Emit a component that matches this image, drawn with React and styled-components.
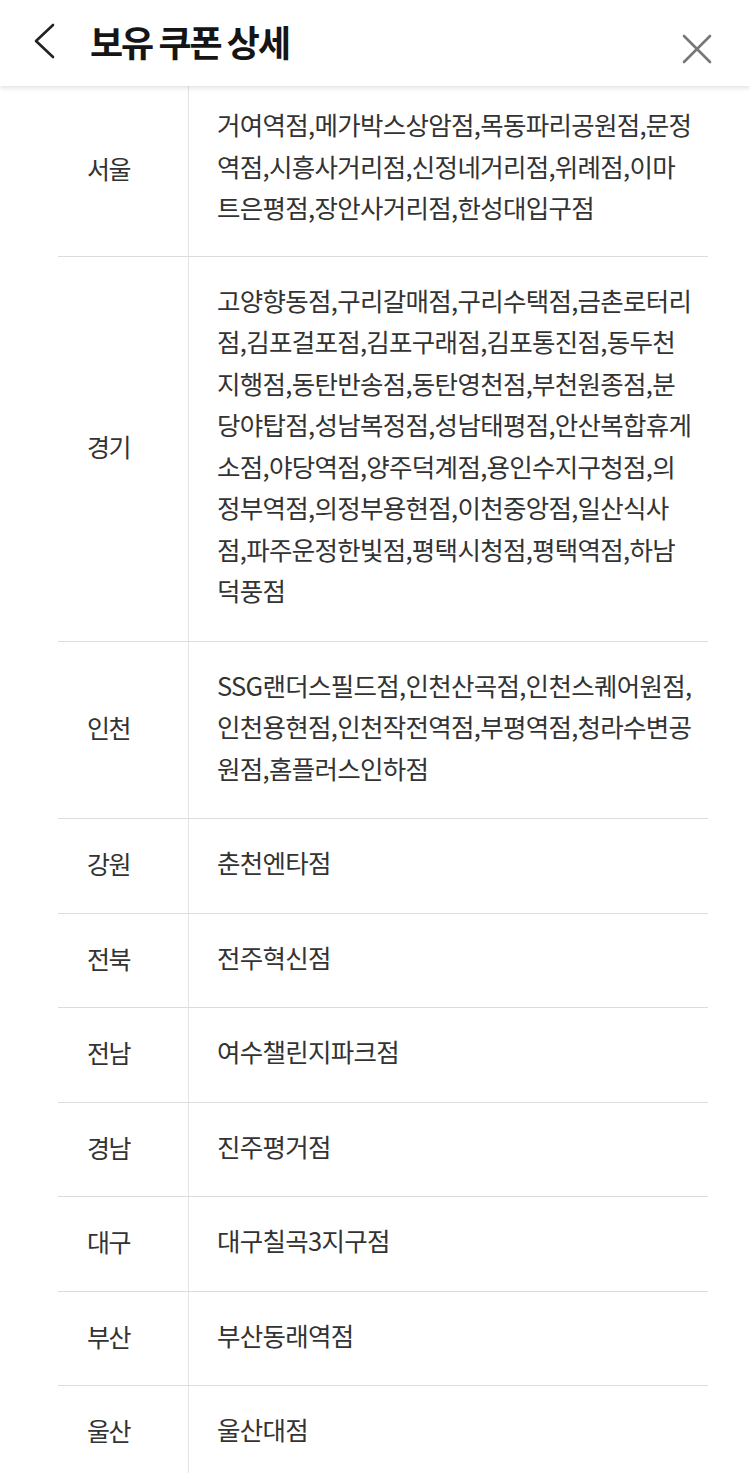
import React from "react";
import styled, {createGlobalStyle} from "styled-components";

const GlobalStyle = createGlobalStyle`
  body {
    margin: 0;
    background: #fff;
    font-family: "Noto Sans CJK KR", "Noto Sans", sans-serif;
  }
`;

const Page = styled.div`
  width: 750px;
  min-height: 1473px;
  background: #fff;
  overflow: hidden;
`;

const Header = styled.div`
  position: relative;
  z-index: 2;
  height: 86px;
  display: flex;
  align-items: center;
  background: #fff;
  box-shadow: 0 2px 5px rgba(0, 0, 0, 0.12);
`;

const BackButton = styled.div`
  width: 90px;
  height: 86px;
  display: flex;
  align-items: center;
  justify-content: center;
  padding-right: 2px;
  padding-bottom: 4px;
  box-sizing: border-box;
`;

const Title = styled.h1`
  flex: 1;
  margin: 0;
  margin-top: -4px;
  font-size: 36px;
  font-weight: 700;
  color: #151515;
  letter-spacing: -2px;
`;

const CloseButton = styled.div`
  width: 84px;
  height: 86px;
  display: flex;
  align-items: center;
  justify-content: center;
  padding-top: 12px;
  padding-right: 22px;
  box-sizing: border-box;
`;

const Table = styled.div`
  display: grid;
  grid-template-columns: 131px 519px;
  margin-left: 58px;
`;

const Label = styled.div`
  display: flex;
  align-items: center;
  padding-left: 29px;
  padding-bottom: 5px;
  border-right: 1px solid #e3e3e3;
  border-bottom: ${p => (p.last ? "none" : "1px solid #dcdcdc")};
  font-size: 25px;
  color: #333;
  letter-spacing: -1.6px;
`;

const Stores = styled.div`
  padding: ${p => (p.first ? "17px 0 28px" : "22px 0 30px")} 28px;
  border-bottom: ${p => (p.last ? "none" : "1px solid #dcdcdc")};
  font-size: 25.5px;
  line-height: 41.5px;
  color: #333;
  letter-spacing: -0.7px;
`;

const Line = styled.div`
  white-space: nowrap;
`;

const rows = [
  {region: "서울", lines: ["거여역점,메가박스상암점,목동파리공원점,문정", "역점,시흥사거리점,신정네거리점,위례점,이마", "트은평점,장안사거리점,한성대입구점"]},
  {region: "경기", lines: ["고양향동점,구리갈매점,구리수택점,금촌로터리", "점,김포걸포점,김포구래점,김포통진점,동두천", "지행점,동탄반송점,동탄영천점,부천원종점,분", "당야탑점,성남복정점,성남태평점,안산복합휴게", "소점,야당역점,양주덕계점,용인수지구청점,의", "정부역점,의정부용현점,이천중앙점,일산식사", "점,파주운정한빛점,평택시청점,평택역점,하남", "덕풍점"]},
  {region: "인천", lines: ["SSG랜더스필드점,인천산곡점,인천스퀘어원점,", "인천용현점,인천작전역점,부평역점,청라수변공", "원점,홈플러스인하점"]},
  {region: "강원", lines: ["춘천엔타점"]},
  {region: "전북", lines: ["전주혁신점"]},
  {region: "전남", lines: ["여수챌린지파크점"]},
  {region: "경남", lines: ["진주평거점"]},
  {region: "대구", lines: ["대구칠곡3지구점"]},
  {region: "부산", lines: ["부산동래역점"]},
  {region: "울산", lines: ["울산대점"]},
];

export default function App() {
  return (
    <Page>
      <GlobalStyle/>
      <Header>
        <BackButton>
          <svg width="26" height="36" viewBox="0 0 26 36" fill="none">
            <path d="M22 2 L5 18 L22 34" stroke="#222" strokeWidth="2.6" strokeLinecap="round" strokeLinejoin="round"/>
          </svg>
        </BackButton>
        <Title>보유 쿠폰 상세</Title>
        <CloseButton>
          <svg width="30" height="30" viewBox="0 0 30 30" fill="none">
            <path d="M2 2 L28 28 M28 2 L2 28" stroke="#777" strokeWidth="2.6" strokeLinecap="round"/>
          </svg>
        </CloseButton>
      </Header>
      <Table>
        {rows.map((row, i) => {
          const last = i === rows.length - 1;
          return (
            <React.Fragment key={row.region}>
              <Label last={last}>{row.region}</Label>
              <Stores first={i === 0} last={last}>
                {row.lines.map(line => <Line key={line}>{line}</Line>)}
              </Stores>
            </React.Fragment>
          );
        })}
      </Table>
    </Page>
  );
}
